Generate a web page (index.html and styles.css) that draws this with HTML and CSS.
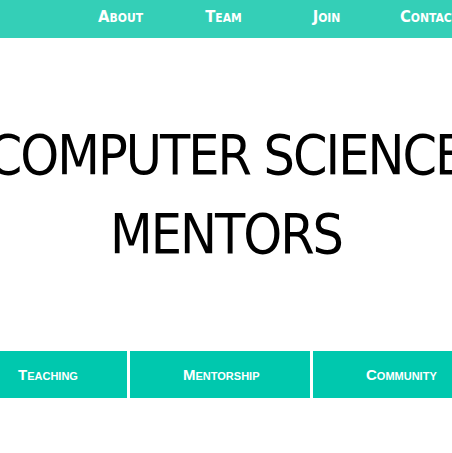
FILE: index.html
```html
<!DOCTYPE html>
<html lang="en">
<head>
<meta charset="utf-8">
<title>Computer Science Mentors</title>
<link rel="stylesheet" href="styles.css">
</head>
<body>
<header class="topbar">
  <nav class="nav">
    <a class="nav-item" href="#">About</a>
    <a class="nav-item" href="#">Team</a>
    <a class="nav-item" href="#">Join</a>
    <a class="nav-item" href="#">Contact</a>
  </nav>
</header>
<main class="hero">
  <h1 class="title">COMPUTER SCIENCE<br>MENTORS</h1>
</main>
<section class="tabs">
  <div class="tab tab-first">Teaching</div>
  <div class="tab tab-mid">Mentorship</div>
  <div class="tab tab-last">Community</div>
</section>
</body>
</html>
```
FILE: styles.css
```css
html, body {
  margin: 0;
  padding: 0;
  background: #ffffff;
  overflow: hidden;
}
body {
  width: 452px;
  height: 453px;
}
.topbar {
  background: #34cfb7;
  height: 38px;
}
.nav {
  display: flex;
  padding-left: 69px;
  height: 38px;
  align-items: center;
}
.nav-item {
  flex: 0 0 103px;
  text-align: center;
  color: #ffffff;
  text-decoration: none;
  font-family: "DejaVu Sans Condensed", "DejaVu Sans", sans-serif;
  font-weight: 700;
  font-variant: small-caps;
  font-size: 16.5px;
  white-space: nowrap;
  margin-top: -6px;
}
.hero {
  padding-top: 78px;
  height: 233px;
  box-sizing: border-box;
}
.title {
  margin: 0 -100px;
  text-align: center;
  font-family: "DejaVu Sans Condensed", "DejaVu Sans", sans-serif;
  font-weight: 400;
  font-size: 55px;
  letter-spacing: -2px;
  line-height: 79px;
  color: #000000;
  white-space: nowrap;
}
.tabs {
  display: flex;
  gap: 3px;
  margin-top: 80px;
  height: 47px;
}
.tab {
  background: #00c8ae;
  color: #ffffff;
  font-family: "Liberation Sans", Arial, sans-serif;
  font-weight: 700;
  font-variant: small-caps;
  font-size: 15px;
  display: flex;
  align-items: center;
  white-space: nowrap;
  flex: 0 0 auto;
}
.tab-first {
  width: 127px;
  padding-left: 18px;
  box-sizing: border-box;
}
.tab-mid {
  width: 180px;
  padding-left: 53px;
  box-sizing: border-box;
}
.tab-last {
  width: 180px;
  padding-left: 53px;
  box-sizing: border-box;
}
```
